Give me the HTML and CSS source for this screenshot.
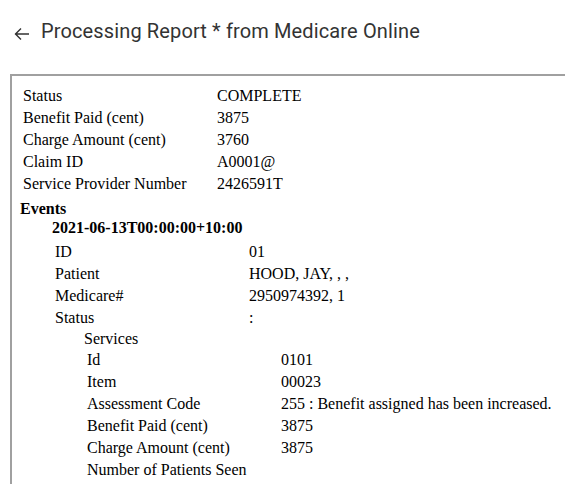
FILE: index.html
```html
<!DOCTYPE html>
<html>
<head>
<meta charset="utf-8">
<link rel="stylesheet" href="styles.css">
</head>
<body>
<header class="topbar">
  <svg class="back" width="16" height="14" viewBox="0 0 16 14" aria-hidden="true">
    <path d="M1 7H15M7 1.5L1.5 7L7 12.5" fill="none" stroke="#333" stroke-width="1.4"/>
  </svg>
  <h1 class="title">Processing Report * from Medicare Online</h1>
</header>
<main class="frame">
  <div class="report">
    <table class="kv">
      <tr><td class="k">Status</td><td>COMPLETE</td></tr>
      <tr><td class="k">Benefit Paid (cent)</td><td>3875</td></tr>
      <tr><td class="k">Charge Amount (cent)</td><td>3760</td></tr>
      <tr><td class="k">Claim ID</td><td>A0001@</td></tr>
      <tr><td class="k">Service Provider Number</td><td>2426591T</td></tr>
    </table>
    <div class="section-title">Events</div>
    <div class="indent">
      <div class="date">2021-06-13T00:00:00+10:00</div>
      <table class="kv">
        <tr><td class="k">ID</td><td>01</td></tr>
        <tr><td class="k">Patient</td><td>HOOD, JAY, , ,</td></tr>
        <tr><td class="k">Medicare#</td><td>2950974392, 1</td></tr>
        <tr><td class="k">Status</td><td>:</td></tr>
      </table>
      <div class="indent">
        <div class="sub-title">Services</div>
        <table class="kv">
          <tr><td class="k">Id</td><td>0101</td></tr>
          <tr><td class="k">Item</td><td>00023</td></tr>
          <tr><td class="k">Assessment Code</td><td>255 : Benefit assigned has been increased.</td></tr>
          <tr><td class="k">Benefit Paid (cent)</td><td>3875</td></tr>
          <tr><td class="k">Charge Amount (cent)</td><td>3875</td></tr>
          <tr><td class="k">Number of Patients Seen</td><td></td></tr>
        </table>
      </div>
    </div>
  </div>
</main>
</body>
</html>
```
FILE: styles.css
```css
html, body {
  margin: 0;
  padding: 0;
  overflow: hidden;
  background: #fff;
}
.topbar {
  display: flex;
  align-items: flex-start;
  height: 74px;
  padding: 19px 0 0 14px;
  box-sizing: border-box;
}
.back {
  display: block;
  margin: 8px 11px 0 0;
}
.title {
  margin: 0;
  font-family: Roboto, "Liberation Sans", sans-serif;
  font-weight: 400;
  font-size: 20px;
  line-height: 24px;
  letter-spacing: 0.13px;
  color: #333;
}
.frame {
  margin-left: 10px;
  width: 620px;
  height: 410px;
  border: 2px solid #a0a0a0;
  border-right: none;
  border-bottom: none;
  box-sizing: border-box;
}
.report {
  padding: 8px;
  font-family: "Liberation Serif", "Times New Roman", Times, serif;
  font-size: 16px;
  color: #000;
}
.kv {
  border-spacing: 2px;
  font-family: inherit;
  font-size: 16px;
}
.kv td {
  padding: 1px;
  vertical-align: top;
  white-space: nowrap;
}
.kv td.k {
  width: 190px;
}
.section-title {
  font-weight: bold;
  margin-top: 4px;
}
.date {
  font-weight: bold;
  margin: 1px 0 3px;
}
.indent {
  margin-left: 32px;
}
.sub-title {
  margin: 0;
}
```
